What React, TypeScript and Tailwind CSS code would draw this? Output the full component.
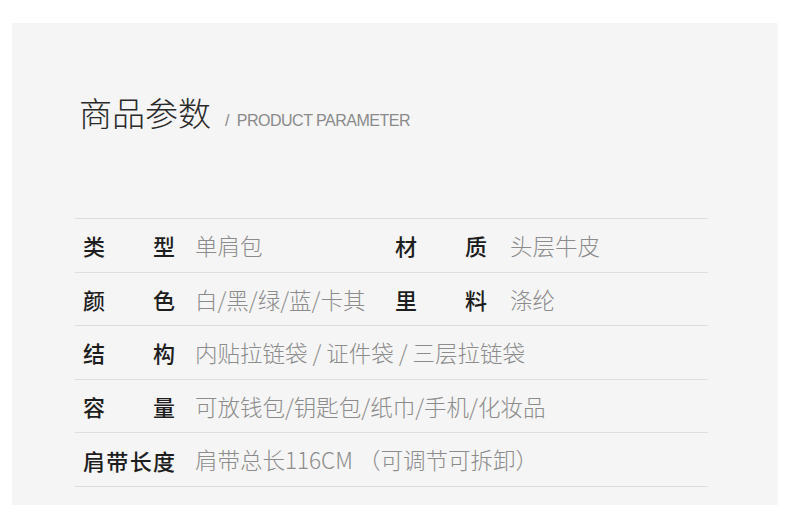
import React from 'react';

type Cell = { label: string[]; value: React.ReactNode };
type Row = { left: Cell; right?: Cell };

const ROWS: Row[] = [
  { left: { label: ['类', '型'], value: '单肩包' }, right: { label: ['材', '质'], value: '头层牛皮' } },
  { left: { label: ['颜', '色'], value: '白/黑/绿/蓝/卡其' }, right: { label: ['里', '料'], value: '涤纶' } },
  { left: { label: ['结', '构'], value: '内贴拉链袋 / 证件袋 / 三层拉链袋' } },
  { left: { label: ['容', '量'], value: '可放钱包/钥匙包/纸巾/手机/化妆品' } },
  { left: { label: ['肩', '带', '长', '度'], value: '肩带总长116CM （可调节可拆卸）' } },
];

const Label = ({ chars }: { chars: string[] }) => (
  <div className="w-[92px] shrink-0 flex justify-between text-[22px] font-medium text-[#1e1e1e]">
    {chars.map((c, i) => (
      <span key={i}>{c}</span>
    ))}
  </div>
);

const App: React.FC = () => {
  return (
    <div
      className="w-[790px] h-[505px] bg-white overflow-hidden pt-[23px] pl-[12px]"
      style={{ fontFamily: '"Noto Sans CJK SC", "Noto Sans", sans-serif' }}
    >
      <div className="w-[766px] h-[482px] bg-[#f5f5f5] pt-[69px] pl-[63px]">
        {/* Title */}
        <div className="flex items-baseline ml-[4px] h-[40px]">
          <h1 className="text-[33px] leading-[40px] font-light text-[#2a2a2a]">商品参数</h1>
          <span className="ml-[14px] text-[16px] text-[#8a8a8a] tracking-[-0.5px] font-['Liberation_Sans',sans-serif]">
            /&nbsp;&nbsp;PRODUCT PARAMETER
          </span>
        </div>

        {/* Params table */}
        <div className="mt-[86px] w-[633px] border-t border-[#dedede]">
          {ROWS.map((row, i) => (
            <div key={i} className="h-[53.6px] border-b border-[#dedede] flex items-center pl-[8px] leading-none">
              <Label chars={row.left.label} />
              <div className="ml-[20px] w-[200px] shrink-0 whitespace-nowrap text-[22.5px] font-light text-[#8c8c8c]">
                {row.left.value}
              </div>
              {row.right && (
                <>
                  <Label chars={row.right.label} />
                  <div className="ml-[23px] whitespace-nowrap text-[22.5px] font-light text-[#8c8c8c]">
                    {row.right.value}
                  </div>
                </>
              )}
            </div>
          ))}
        </div>
      </div>
    </div>
  );
};

export default App;
